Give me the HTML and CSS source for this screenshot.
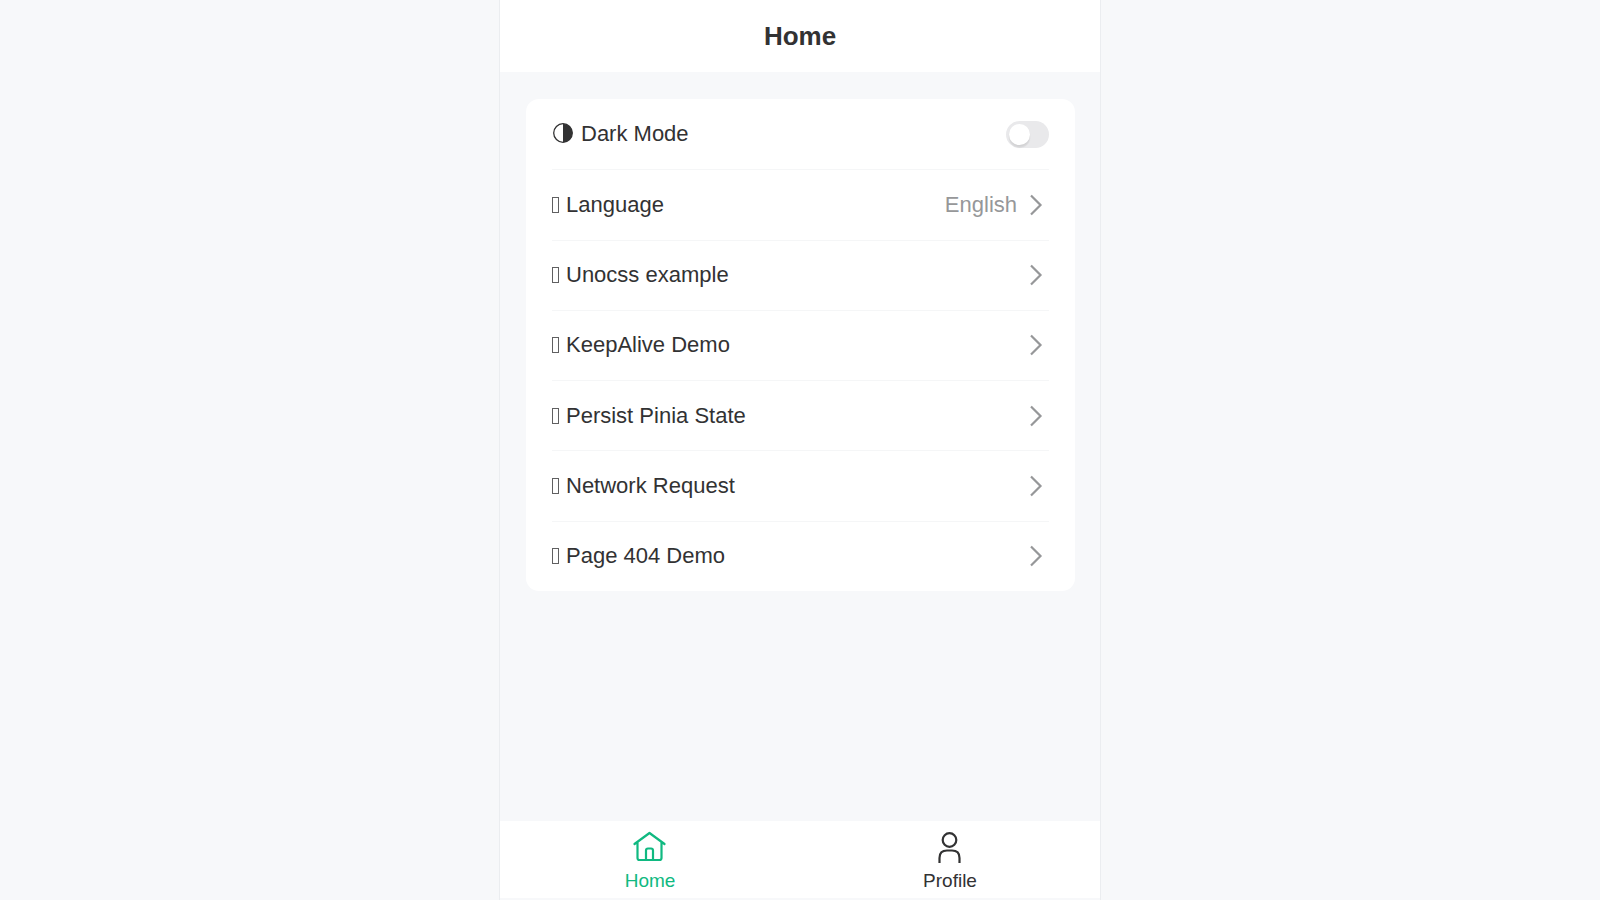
FILE: index.html
```html
<!DOCTYPE html>
<html lang="en">
<head>
<meta charset="utf-8">
<meta name="viewport" content="width=device-width, initial-scale=1">
<title>Home</title>
<link rel="stylesheet" href="styles.css">
</head>
<body>
<div class="app">
  <header class="navbar"><h1 class="navbar-title">Home</h1></header>
  <main class="content">
    <div class="cells">
      <div class="cell">
        <svg class="contrast" viewBox="0 0 20 20" aria-hidden="true"><circle cx="10" cy="10" r="9.3"/><path d="M10 .7a9.3 9.3 0 0 1 0 18.6z"/></svg>
        <label for="dark">Dark Mode</label>
        <input class="switch" type="checkbox" role="switch" id="dark">
      </div>
      <a class="cell" href="#language"><i class="glyph"></i><span>Language</span><span class="value">English</span><svg class="arrow" viewBox="0 0 26 26"><path d="M8 3.500l9.500 9.500-9.500 9.500"/></svg></a>
      <a class="cell" href="#unocss"><i class="glyph"></i><span>Unocss example</span><svg class="arrow" viewBox="0 0 26 26"><path d="M8 3.500l9.500 9.500-9.500 9.500"/></svg></a>
      <a class="cell" href="#keepalive"><i class="glyph"></i><span>KeepAlive Demo</span><svg class="arrow" viewBox="0 0 26 26"><path d="M8 3.500l9.500 9.500-9.500 9.500"/></svg></a>
      <a class="cell" href="#pinia"><i class="glyph"></i><span>Persist Pinia State</span><svg class="arrow" viewBox="0 0 26 26"><path d="M8 3.500l9.500 9.500-9.500 9.500"/></svg></a>
      <a class="cell" href="#network"><i class="glyph"></i><span>Network Request</span><svg class="arrow" viewBox="0 0 26 26"><path d="M8 3.500l9.500 9.500-9.500 9.500"/></svg></a>
      <a class="cell" href="#404"><i class="glyph"></i><span>Page 404 Demo</span><svg class="arrow" viewBox="0 0 26 26"><path d="M8 3.500l9.500 9.500-9.500 9.500"/></svg></a>
    </div>
  </main>
  <nav class="tabbar">
    <a class="tab active" href="#home">
      <svg class="tab-icon" viewBox="0 0 36 36"><path d="M2.500 15L17.500 4l15 11M5.500 13v16q0 2 2 2h20q2 0 2-2V13M14 31V21.500q0-2 2-2h3q2 0 2 2v9.500"/></svg>
      <span>Home</span>
    </a>
    <a class="tab" href="#profile">
      <svg class="tab-icon user" viewBox="0 0 36 36"><circle cx="17.500" cy="11" r="6.800"/><path d="M7.500 34v-5q0-7.500 7.500-7.500h5q7.500 0 7.500 7.500v5"/></svg>
      <span>Profile</span>
    </a>
  </nav>
</div>
</body>
</html>
```
FILE: styles.css
```css
* {
  box-sizing: border-box;
}

body {
  margin: 0;
  background: #f7f8fa;
  color: #323233;
  font-family: "Liberation Sans", Arial, sans-serif;
}

.app {
  display: flex;
  flex-direction: column;
  max-width: 602px;
  min-height: 100vh;
  margin: 0 auto;
  border: solid #ebedf0;
  border-width: 0 1px;
}

.navbar {
  padding: 16px;
  background: #fff;
  text-align: center;
}

.navbar-title {
  margin: 0;
  font-size: 26px;
  line-height: 40px;
}

.content {
  flex: 1;
  padding: 27px 25px 27px 26px;
}

.cells {
  display: grid;
  grid-auto-rows: 1fr;
  min-height: 492px;
  padding: 0 26px;
  overflow: hidden;
  border-radius: 13px;
  background: #fff;
}

.cell {
  display: flex;
  align-items: center;
  color: inherit;
  font-size: 22px;
  line-height: 38px;
  text-decoration: none;
}

.cell + .cell {
  border-top: 1px solid #f5f6f7;
}

.contrast {
  width: 20px;
  height: 20px;
  margin: 0 8px 2px 1px;
  fill: currentColor;
}

.contrast circle {
  fill: none;
  stroke: currentColor;
  stroke-width: 1.3;
}

.glyph {
  width: 7px;
  height: 16px;
  margin-right: 7px;
  border: 1px solid #606061;
}

.value {
  margin-left: auto;
  color: #969799;
}

.arrow {
  width: 26px;
  height: 26px;
  margin-left: auto;
  fill: none;
  stroke: #969799;
  stroke-width: 2.2;
}

.value + .arrow {
  margin-left: 6px;
}

.switch {
  display: flex;
  appearance: none;
  width: 43px;
  height: 27px;
  margin: 0 0 0 auto;
  padding: 3px;
  border-radius: 14px;
  background: #e9e9eb;
}

.switch::before {
  content: "";
  width: 21px;
  height: 21px;
  border-radius: 50%;
  background: #fff;
  box-shadow: 0 3px 1px rgba(0, 0, 0, 0.05), 0 2px 2px rgba(0, 0, 0, 0.05);
}

.switch:checked {
  justify-content: flex-end;
  background: #00b57d;
}

.tabbar {
  display: flex;
  margin-bottom: 2px;
  background: #fff;
}

.tab {
  display: flex;
  flex: 1;
  flex-direction: column;
  align-items: center;
  gap: 6px;
  padding: 8px 0 7px;
  color: #323233;
  font-size: 19px;
  line-height: 20px;
  text-decoration: none;
}

.tab.active {
  color: #10b981;
}

.tab-icon {
  width: 36px;
  height: 36px;
  fill: none;
  stroke: currentColor;
  stroke-width: 2.2;
  stroke-linejoin: round;
  stroke-linecap: round;
}

.tab-icon.user {
  stroke-linecap: butt;
}
```
